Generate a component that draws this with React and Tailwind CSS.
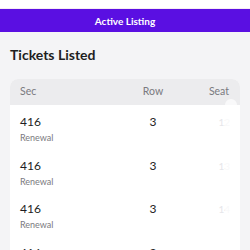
import React from "react";

const tickets = [
  { sec: "416", row: "3", seat: "12", note: "Renewal" },
  { sec: "416", row: "3", seat: "13", note: "Renewal" },
  { sec: "416", row: "3", seat: "14", note: "Renewal" },
  { sec: "416", row: "3", seat: "15", note: "Renewal" },
];

function App() {
  return (
    <div className="w-[250px] h-[250px] overflow-hidden bg-[#f4f4f6] font-['Lato',sans-serif]">
      {/* top strip (cut off content above) */}
      <div className="h-[9px] bg-white border-b border-[#f6eaf6]" />

      {/* Status bar */}
      <div className="h-[23px] bg-[#5a0fe2] flex items-center justify-center">
        <span className="text-white text-[10px] font-bold leading-none">Active Listing</span>
      </div>

      <main className="px-[10px] pt-[13px]">
        <h2 className="text-[14px] leading-[20px] font-bold text-[#1e1e22] mb-[14px]">
          Tickets Listed
        </h2>

        <div className="relative rounded-[8px] overflow-hidden bg-white">
          {/* Header */}
          <div className="h-[26px] bg-[#ececee] flex items-center text-[10.5px] text-[#7a7a80]">
            <div className="w-[123px] pl-[10px]">Sec</div>
            <div className="w-[40px] text-center">Row</div>
            <div className="flex-1 text-right pr-[11px]">Seat</div>
          </div>

          {/* Rows */}
          {tickets.map((t, i) => (
            <div key={i} className="flex pt-[9px] pb-[4.5px]">
              <div className="w-[123px] pl-[10px]">
                <div className="text-[12px] leading-[16px] text-[#1e1e22]">{t.sec}</div>
                <div className="mt-[2px] text-[9px] leading-[12px] text-[#7a7a80]">{t.note}</div>
              </div>
              <div className="w-[40px] text-center text-[12px] leading-[16px] text-[#1e1e22]">
                {t.row}
              </div>
              <div className="flex-1 text-right pr-[10px] text-[10px] leading-[16px] text-[#e6e6ea]">
                {t.seat}
              </div>
            </div>
          ))}

          <div className="absolute right-[3px] top-[20px] bottom-0 w-[12px] bg-white/70 rounded-t-[6px]" />
        </div>
      </main>
    </div>
  );
}

export default App;
